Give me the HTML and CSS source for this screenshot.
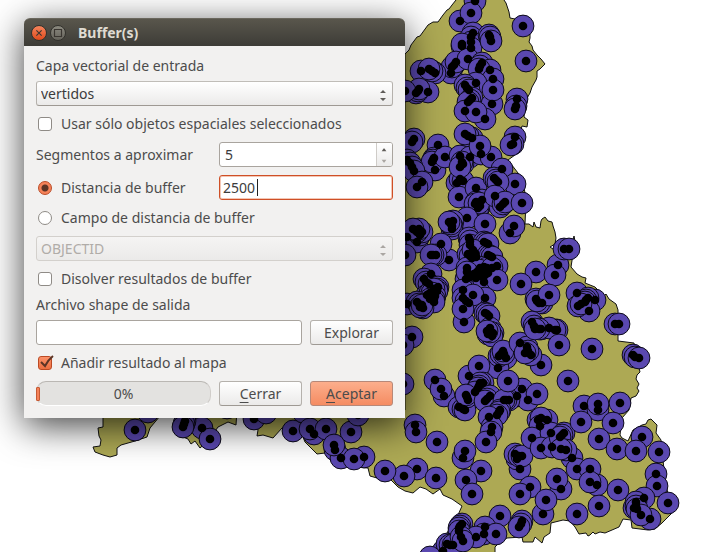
FILE: index.html
```html
<!DOCTYPE html>
<html lang="es">
<head>
<meta charset="utf-8">
<title>Buffer(s)</title>
<link rel="stylesheet" href="styles.css">
</head>
<body>
<main class="desktop">
  <svg class="map" viewBox="0 0 708 552" preserveAspectRatio="xMinYMin slice" aria-hidden="true">
    <defs>
      <marker id="buffer" viewBox="-12 -12 24 24" markerWidth="24" markerHeight="24" markerUnits="userSpaceOnUse">
        <circle class="buffer" r="10.9"/>
      </marker>
      <marker id="dot" viewBox="-5 -5 10 10" markerWidth="10" markerHeight="10" markerUnits="userSpaceOnUse">
        <circle class="dot" r="4.3"/>
      </marker>
      <polyline id="points" points="
        475,1 460,21 471,13 523,26 526,61 473,33 471,37 471,42 471,48 462,46 462,44 489,35 490,37 491,41
        451,73 454,65 452,67 456,62 468,59 482,63 480,66 490,70 479,69 493,79 476,83 465,85 467,88 469,90 472,98 492,104 493,90
        470,100 468,102 465,111 485,119 476,112 517,99 516,106 515,109
        421,71 435,73 432,71 429,69 428,92 416,93 418,91 419,89 405,91
        472,138 468,136 465,134 515,137 513,144 511,145 414,139 412,142 438,145 434,158 433,160 435,170 432,162 445,157
        407,160 410,163 412,167 414,171 422,182 417,187 460,156 470,157 481,154 491,157 480,146
        457,183 460,179 463,181 463,164 462,162 460,167 459,197 476,188 502,169 494,178 496,180 515,184 498,182
        482,200 476,202 480,206 478,208 475,204 479,203 500,207 495,196 503,204 505,202 522,203 467,218 485,224
        453,221 452,229 452,226 451,224 449,222 510,233 514,226
        407,237 417,242 420,235 422,232 417,232 415,230 419,229 413,229 405,255 449,260 441,244 436,255 433,255 431,255
        469,238 470,241 470,245 484,242 486,243 488,244 468,254 475,253 472,258 470,256 476,257 473,250 488,255 490,256 492,257 497,266
        467,268 466,279 470,277 472,275 474,274 477,272 480,268 484,267 487,268 488,273 485,275 481,276 476,278 479,270 492,268 484,282 497,280 467,272
        536,272 521,284 558,265 555,275 564,249 569,249
        431,274 424,279 426,282 429,284 438,287 437,289 437,291 434,289 427,295 430,293 432,293 435,296 430,299 434,299 434,302 407,304 417,302 419,304 423,308 420,307 422,305
        463,290 485,298 463,298 466,301 469,303 473,295 464,322 463,309 485,313 487,314 489,316
        488,334 490,328 493,333 492,336 490,332 487,331 412,337 403,345 403,384
        506,358 498,368 499,356 501,354 504,354 503,351 541,365 520,343 527,347 531,355 528,351 525,353 469,376 479,366
        536,299 542,303 539,303 537,301 549,295 532,322 534,326 541,329 557,330 555,330 549,328 539,329 535,329 559,345
        577,293 595,300 588,298 586,300 585,302 589,311 578,306 581,304 592,349 568,381 615,324 619,324 633,355 635,357 639,358
        435,380 444,396 441,389 483,383 480,383 479,386 478,388 475,392 468,400 459,407 463,409 465,410 467,397 466,395
        490,396 487,399 485,401 522,389 517,396 528,400 537,394 509,400 506,400 504,400 508,381
        500,410 499,412 497,415 489,417 492,427 491,432 486,442 415,425 416,432 437,442
        417,469 404,476 436,478 463,458 465,451 481,471 466,480 472,494
        520,469 517,459 515,454 519,456 522,456 530,487 520,494 538,420 547,420 541,418 540,426
        532,438 551,433 541,448 552,447 564,433 562,435 560,437 572,458 566,450 561,449
        561,489 557,479 543,514 546,500 522,521 521,524 519,527 500,516
        462,524 460,526 459,528 459,531 485,527 484,534 476,537 496,534 443,551 447,544 450,545 453,545 461,537 463,541 430,557
        584,406 598,410 598,404 620,403 581,422 613,423 599,439 617,449 642,437 636,451 659,452
        577,469 590,469 597,485 590,482 618,490 599,506 577,514
        656,474 657,486 668,503 644,498 634,508 636,502 636,506 637,509 650,519 641,515
        148,412 135,430 202,428 185,421 184,424 183,427 210,439 227,408 254,419 266,413 293,431
        303,412 314,434 310,429 326,429 351,432 358,415 335,450 341,458 334,445 364,457 354,459 385,471"/>
    </defs>
    <g class="land">
      <path d="M405 54L409 50L411 45L417 37L420 36L428 25L433 22L438 22L443 15L447 10L449 9L452 5L456 0L457-5H503L504 0L506 3L508 9L509 12L510 18L520 20L530 32L530 38L529 42L532 46L533 50L537 55L541 59L545 64L540 69L537 71L537 77L536 80L532 87L530 93L526 100L524 117L528 120L527 127L522 126L518 140L515 155L508 160L518 173L523 180L526 200L525 224L529 224L533 227L534 222L536 227L540 228L541 221L542 219L545 217L548 221L552 222L553 226L555 232L556 238L555 244L550 247L553 249L563 241L573 240L574 236L575 241L571 267L577 274L582 277L586 278L585 283L595 287L604 296L606 294L609 299L616 304L618 310V341L626 342L634 343L637 360L640 372L637 375L636 379L639 384L637 388L639 391L636 396L631 398L629 410L622 418L620 435L622 438L628 441L633 430L642 425L646 424L648 420L651 419L657 425L656 433L661 440L664 470L666 486L673 512L662 523L655 529L648 530L632 528L631 520L623 519L619 527L612 530L605 533L600 532L595 534L593 532L590 535L588 536L586 533L579 534L575 527L570 521L563 520L551 523L550 533L544 537L542 543L535 537L533 542L523 542L522 537L507 538L500 542L495 547V552L490 560H430L437 545L447 533L458 515L462 506L452 499L443 495L440 489L433 494L426 489L420 487L413 493L405 491L398 487L389 478L377 478L370 476L368 468L340 466L325 453L317 454L311 448L305 442L303 437L290 427L282 428L273 438L263 435L257 436L258 430L250 410H405Z"/>
      <path d="M103 410V427L98 428L99 436L101 440L100 446L93 447L95 452L103 455L110 457L117 455L117 448L121 445L135 441L147 437L150 428L165 410Z"/>
      <path d="M178 410V435L188 439L191 444L195 441L200 448L209 440L218 427L228 422L236 425L237 410Z"/>
    </g>
    <use href="#points" class="layer" marker-start="url(#buffer)" marker-mid="url(#buffer)" marker-end="url(#buffer)"/>
    <use href="#points" class="layer" marker-start="url(#dot)" marker-mid="url(#dot)" marker-end="url(#dot)"/>
  </svg>

  <section class="dialog" role="dialog" aria-labelledby="title">
    <header class="titlebar">
      <button class="window-button close" type="button" aria-label="Cerrar ventana">
        <svg viewBox="0 0 16 16"><path d="M5 5L11 11M11 5L5 11"/></svg>
      </button>
      <button class="window-button maximize" type="button" aria-label="Maximizar">
        <svg viewBox="0 0 16 16"><path d="M4 4H12V12H4Z"/></svg>
      </button>
      <h1 class="title" id="title">Buffer(s)</h1>
    </header>
    <form class="form">
      <label class="caption wide" for="layer">Capa vectorial de entrada</label>
      <div class="combo wide">
        <select class="control" id="layer"><option>vertidos</option></select>
        <svg class="arrows" viewBox="0 0 6 13"><path d="M0 4L3 1L6 4ZM0 9L3 12L6 9Z"/></svg>
      </div>
      <label class="choice wide"><input class="tick" type="checkbox"><span>Usar sólo objetos espaciales seleccionados</span></label>

      <label class="side" for="segments">Segmentos a aproximar</label>
      <div class="spin pair">
        <input class="control" id="segments" type="number" value="5">
        <svg class="stepper" viewBox="0 0 16 23"><path class="up" d="M5 8L7 5H8L10 8Z"/><path class="down" d="M5 17L7 20H8L10 17Z"/></svg>
      </div>

      <label class="choice"><input class="tick round" type="radio" name="mode" id="fixed" checked><span>Distancia de buffer</span></label>
      <div class="entry pair">
        <input class="control focused" type="text" value="2500" aria-label="Distancia de buffer">
        <span class="caret"></span>
      </div>

      <label class="choice wide"><input class="tick round" type="radio" name="mode"><span>Campo de distancia de buffer</span></label>
      <div class="combo wide">
        <select class="control" disabled aria-label="Campo de distancia de buffer"><option>OBJECTID</option></select>
        <svg class="arrows faded" viewBox="0 0 6 13"><path d="M0 4L3 1L6 4ZM0 9L3 12L6 9Z"/></svg>
      </div>
      <label class="choice wide"><input class="tick" type="checkbox"><span>Disolver resultados de buffer</span></label>

      <label class="caption wide" for="output">Archivo shape de salida</label>
      <input class="control output" id="output" type="text">
      <button class="button" type="button">Explorar</button>

      <label class="choice wide"><input class="tick" type="checkbox" checked><svg class="check" viewBox="0 0 16 16"><path d="M3 8L7 12Q10 6 15 2"/></svg><span>Añadir resultado al mapa</span></label>

      <div class="progress" role="progressbar" aria-label="Progreso" aria-valuenow="0">0%</div>
      <button class="button" type="button"><u>C</u>errar</button>
      <button class="button primary" type="submit"><u>A</u>ceptar</button>
    </form>
  </section>
</main>
</body>
</html>
```
FILE: styles.css
```css
*, *::before { box-sizing: border-box; }

body {
  margin: 0;
  background: #fff;
  color: #4c4c4c;
  font: 14px/16px "Noto Sans", "Open Sans", sans-serif;
}

.desktop {
  position: relative;
  min-height: 100vh;
  padding: 18px 24px;
  overflow: hidden;
}

.map {
  position: absolute;
  inset: 0;
  width: 100%;
  height: 100%;
}

.land { fill: #ada954; stroke: #111; stroke-width: 1; }
.buffer { fill: #5a48b0; stroke: #0c0a18; stroke-width: 1; }
.dot { fill: #000; }
.layer { fill: none; stroke: none; }

.dialog {
  position: relative;
  max-width: 381px;
  border-radius: 6px 6px 0 0;
  background: #f2f1f0;
  box-shadow: 0 8px 36px rgba(0, 0, 0, 0.75);
}

.titlebar {
  display: flex;
  align-items: center;
  gap: 3px;
  height: 28px;
  padding: 0 7px;
  border-top: 1px solid #6a675d;
  border-radius: 6px 6px 0 0;
  background: linear-gradient(#59564c, #3d3c37);
}

.window-button {
  width: 16px;
  height: 16px;
  padding: 0;
  border: 1px solid #33322d;
  border-radius: 50%;
  background: linear-gradient(#8b897f, #65635b);
}

.window-button.close { background: linear-gradient(#f4845c, #df4a1c); }

.window-button svg {
  display: block;
  width: 14px;
  height: 14px;
  fill: none;
  stroke: #3a3631;
  stroke-width: 1.3;
}

.title {
  margin: 0 0 0 9px;
  color: #dfdbd2;
  font-size: 14px;
  font-weight: 700;
}

.form {
  display: grid;
  grid-template-columns: 1fr 83px 83px;
  gap: 8px;
  padding: 12px;
}

.wide { grid-column: 1 / -1; }
.pair { grid-column: 2 / -1; }
.output { grid-column: 1 / 3; }

.caption { margin-bottom: -1px; }
.side { align-self: center; white-space: nowrap; }

.choice {
  position: relative;
  display: flex;
  align-items: center;
  gap: 9px;
  min-height: 20px;
  padding-left: 2px;
  white-space: nowrap;
}

.tick {
  appearance: none;
  width: 14px;
  height: 14px;
  margin: 0;
  border: 1px solid #8f8b86;
  border-radius: 3px;
  background: #fff;
}

.tick:checked { border-color: #bb4a24; background: linear-gradient(#fb9169, #ec6f41); }
.tick.round { border-radius: 50%; }
.tick.round:checked {
  background: radial-gradient(circle, #5c3425 0 3px, #f58259 4px);
}

.check {
  position: absolute;
  left: 2px;
  top: 1px;
  width: 16px;
  height: 16px;
  fill: none;
  stroke: #5c3425;
  stroke-width: 2;
}

.control {
  display: block;
  width: 100%;
  height: 25px;
  margin: 0;
  padding: 0 4px;
  border: 1px solid #a9a49e;
  border-radius: 3px;
  background: #fff;
  color: #3c3c3c;
  font: inherit;
}

.combo, .spin, .entry { position: relative; }

select.control {
  appearance: none;
  border-color: #c0bdb8 #b5b1ac #9e9993;
  background: linear-gradient(#fff, #ebeae9);
}

select.control:disabled {
  border-color: #d3d0cc;
  background: linear-gradient(#f5f4f3, #ebeae9);
  color: #b0aca8;
  opacity: 1;
}

.arrows {
  position: absolute;
  right: 7px;
  top: 8px;
  width: 6px;
  height: 13px;
  fill: #5f5c58;
}

.faded { fill: #aaa6a2; }

.spin .control { padding-left: 5px; appearance: textfield; }
.spin .control::-webkit-inner-spin-button { display: none; }

.stepper {
  position: absolute;
  top: 1px;
  right: 1px;
  width: 16px;
  height: 23px;
  border-left: 1px solid #cfccc8;
  border-radius: 0 2px 2px 0;
  background: linear-gradient(#fff, #ebeae9);
}

.up { fill: #5f5c58; }
.down { fill: #aaa6a2; }

.control.focused {
  padding-left: 3px;
  border-color: #cf4f26;
  outline: none;
  box-shadow: inset 0 0 0 1px #f3c6b4;
}

.caret {
  position: absolute;
  left: 38px;
  top: 4px;
  width: 1px;
  height: 17px;
  background: #222;
}

.button {
  height: 25px;
  padding: 0;
  border: 1px solid #b5b1ac;
  border-bottom-color: #9e9993;
  border-radius: 3px;
  background: linear-gradient(#fff, #ebeae9);
  color: #4c4c4c;
  font: inherit;
}

.button u { text-underline-offset: 3px; }

.primary {
  border-color: #b78878;
  background: linear-gradient(#fcae8c, #f58c62);
}

.progress {
  position: relative;
  height: 25px;
  border: 1px solid #d0cdca;
  border-top-color: #bab7b3;
  border-bottom-color: #fff;
  border-radius: 10px;
  background: #e3e2e0;
  line-height: 24px;
  text-align: center;
}

.progress::before {
  content: "";
  position: absolute;
  left: -1px;
  top: 5px;
  width: 4px;
  height: 14px;
  border: 1px solid #c65a34;
  border-radius: 1px;
  background: #f58259;
}
```
